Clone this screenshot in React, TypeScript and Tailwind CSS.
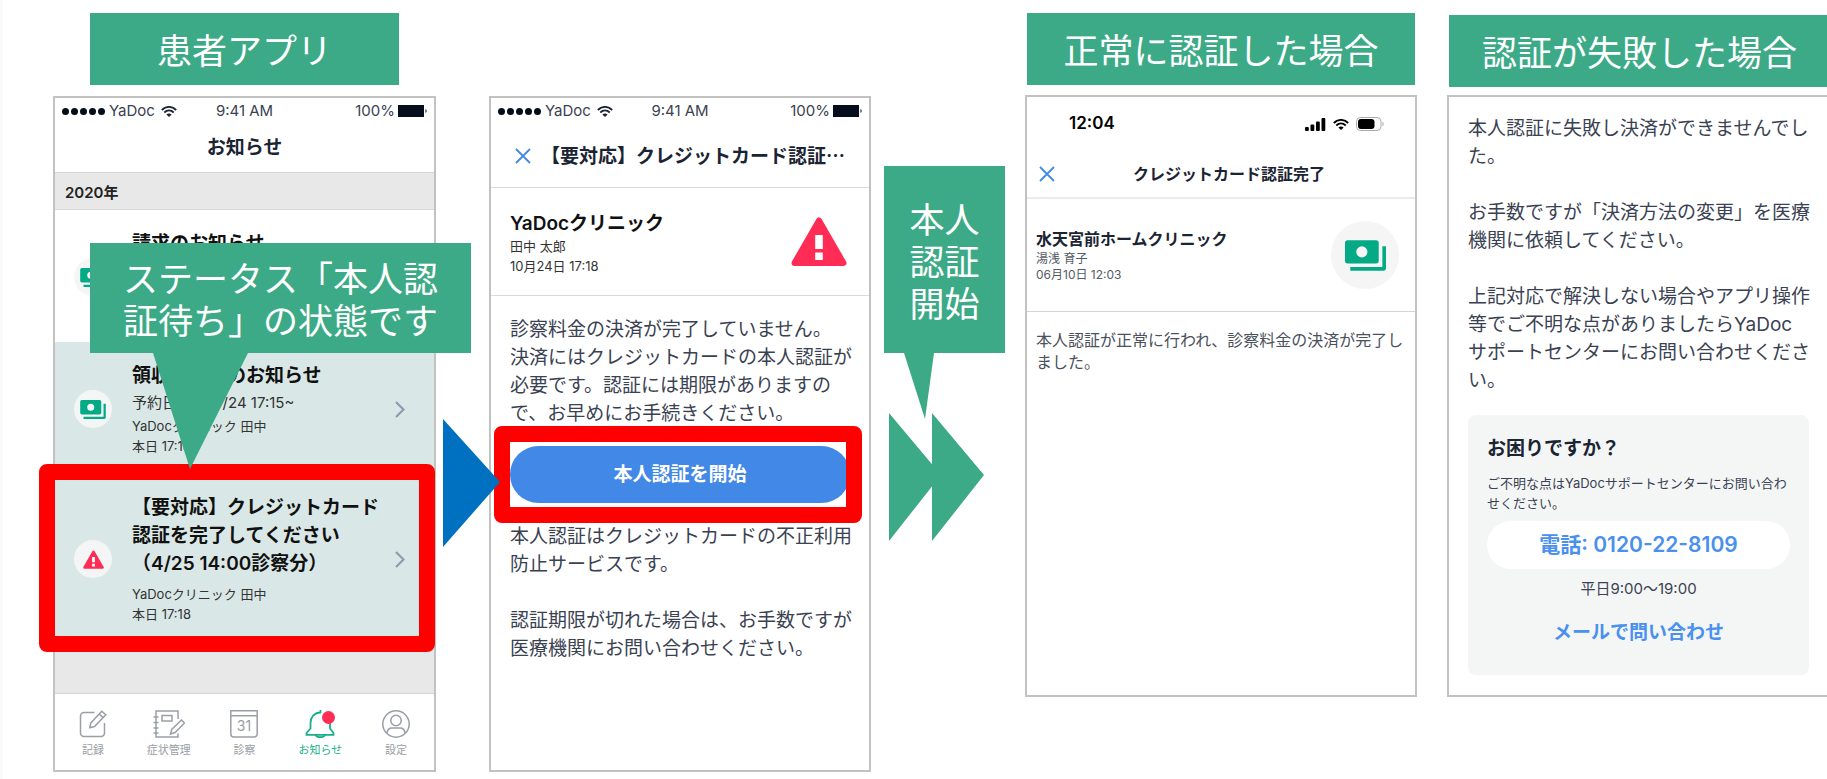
import type { ReactNode } from "react";
import clsx from "clsx";

const JP = "font-['Inter','Noto_Sans_CJK_JP',sans-serif]";
const GREEN = "bg-[#3caa86]";

const TABS = [
  { label: "記録", icon: <RecordIcon /> },
  { label: "症状管理", icon: <NotebookIcon /> },
  { label: "診察", icon: <CalendarIcon /> },
  { label: "お知らせ", icon: <BellIcon />, active: true },
  { label: "設定", icon: <UserIcon /> },
];

function RecordIcon() {
  return (
    <svg viewBox="0 0 28 28" className="size-7" fill="none" stroke="currentColor" strokeWidth="1.5">
      <path d="M15.5 2.5H5A3.5 3.5 0 0 0 1.5 6v17A3.5 3.5 0 0 0 5 26.5h17a3.5 3.5 0 0 0 3.5-3.5V13" />
      <path d="M22.8 1.2l4 3.6-11.3 11.7-4.7 1.3 1-4.9zM20.3 4l3.8 3.6" />
    </svg>
  );
}

function NotebookIcon() {
  return (
    <svg viewBox="0 0 32 28" className="h-7 w-8" fill="none" stroke="currentColor" strokeWidth="1.5">
      <path d="M25 9V1H3v26h22v-3.5" />
      <path d="M.5 7h5M.5 12.5h5M.5 18h5M.5 23h5" />
      <path d="M9 5.5h10v5.5H9z" />
      <path d="M28.5 10l3 3-9.5 9.5-4.5 1.5 1.2-4.5z" />
    </svg>
  );
}

function CalendarIcon() {
  return (
    <svg viewBox="0 0 28 28" className="size-7" fill="none" stroke="currentColor" strokeWidth="1.5">
      <path d="M.8.8h26.4V24a3 3 0 0 1-3 3H3.8a3 3 0 0 1-3-3zM.8 5.8h26.4" />
      <text x="14" y="21" textAnchor="middle" fontSize="14" fill="currentColor" stroke="none">
        31
      </text>
    </svg>
  );
}

function BellIcon() {
  return (
    <svg viewBox="0 0 30 28" className="h-7 w-[30px]" fill="none" stroke="currentColor" strokeWidth="1.8">
      <path d="M16 2.5C9 2.5 5.5 7.5 5.5 13v5.5L1.5 23v1.8h27V23L25 18.5V13M15.5 0v3" />
      <path d="M10.5 25c1 3 8.5 3 9.5 0" />
      <circle cx="23.5" cy="7.5" r="6.5" fill="#ff2d55" stroke="none" />
    </svg>
  );
}

function UserIcon() {
  return (
    <svg viewBox="0 0 30 28" className="h-7 w-[30px]" fill="none" stroke="currentColor" strokeWidth="1.5">
      <circle cx="15" cy="14" r="13.2" />
      <circle cx="15" cy="10.5" r="5.2" />
      <path d="M6 23.3c.3-3.6 1.5-5.3 5-5.3h8c3.5 0 4.7 1.700 5 5.3" />
    </svg>
  );
}

function CashIcon({ className }: { className: string }) {
  return (
    <svg viewBox="0 0 62 46" className={className} fill="#04aa85">
      <path
        fillRule="evenodd"
        d="M4 0h43a4 4 0 0 1 4 4v27a4 4 0 0 1-4 4H4a4 4 0 0 1-4-4V4a4 4 0 0 1 4-4zm21.5 9a8.5 8.5 0 1 0 0 17 8.5 8.5 0 0 0 0-17z"
      />
      <path d="M56.5 9H62v33a4 4 0 0 1-4 4H8v-5.5h48.5z" />
    </svg>
  );
}

function WarningIcon({ className }: { className: string }) {
  return (
    <svg viewBox="0 0 56 49" className={className}>
      <path d="M28 3.5 52.5 46h-49z" fill="#ff2d55" stroke="#ff2d55" strokeWidth="6" strokeLinejoin="round" />
      <path d="M24.2 18h7.6v14h-7.6zM24.2 35.5h7.6V43h-7.6z" fill="#fff" />
    </svg>
  );
}

function WifiIcon({ className }: { className: string }) {
  return (
    <svg viewBox="0 0 16 11" className={className} fill="none" stroke="currentColor" strokeWidth="1.8">
      <path d="M.8 4C5-.2 11-.2 15.2 4M3.300 6.5c2.8-2.7 6.6-2.7 9.4 0" />
      <path d="M8 11 5.4 8.5c1.5-1.4 3.7-1.4 5.2 0z" fill="currentColor" stroke="none" />
    </svg>
  );
}

function CloseButton() {
  return (
    <button type="button" aria-label="閉じる" className="shrink-0 text-[#4288e6]">
      <svg viewBox="0 0 16 16" className="size-4" fill="none" stroke="currentColor" strokeWidth="1.8">
        <path d="M1 1l14 14M15 1 1 15" />
      </svg>
    </button>
  );
}

function Chevron() {
  return (
    <svg viewBox="0 0 10 17" className="h-[17px] w-[10px] shrink-0" fill="none" stroke="#8e9bb0" strokeWidth="2.2">
      <path d="M1 1l7.5 7.5L1 16" />
    </svg>
  );
}

function StatusBar() {
  return (
    <div className="grid h-[26px] grid-cols-[1fr_auto_1fr] items-center px-[7px] text-[15px] text-[#3a4250]">
      <div className="flex items-center gap-1">
        <div className="flex gap-[2px]">
          {[0, 1, 2, 3, 4].map((i) => (
            <span key={i} className="size-[7px] rounded-full bg-[#030d1c]" />
          ))}
        </div>
        <span>YaDoc</span>
        <WifiIcon className="ml-[2px] h-[11px] w-4 text-[#1b2433]" />
      </div>
      <span>9:41 AM</span>
      <div className="flex items-center justify-end gap-[3px]">
        <span>100%</span>
        <svg viewBox="0 0 29 12" className="h-3 w-[29px]" fill="#030d1c">
          <path d="M0 0h26v12H0zM27.5 4c1.500.5 1.500 3.500 0 4z" />
        </svg>
      </div>
    </div>
  );
}

function Banner({ children, className }: { children: ReactNode; className?: string }) {
  return (
    <h2 className={clsx("flex h-[72px] items-center justify-center whitespace-nowrap text-[35px] text-white", GREEN, className)}>
      {children}
    </h2>
  );
}

function Phone({ children, className }: { children: ReactNode; className?: string }) {
  return (
    <section className={clsx("relative flex flex-col border-2 border-[#c2c2c2] bg-white", JP, className)}>
      {children}
    </section>
  );
}

function NoticeRow({
  icon,
  title,
  sub,
  meta,
  unread,
  children,
}: {
  icon: ReactNode;
  title: string;
  sub?: string;
  meta: string;
  unread?: boolean;
  children?: ReactNode;
}) {
  return (
    <li className={clsx("relative", unread ? "bg-[#d9e8e6]" : "bg-white")}>
      <a href="#" className="flex items-center pt-5 pr-[29px] pb-[18px] pl-[19px]">
        <span className="flex size-[38px] shrink-0 items-center justify-center rounded-full bg-[#f4f6f6]">{icon}</span>
        <span className="ml-5 flex-1 whitespace-pre">
          <span className="block text-[19px] leading-7 font-semibold text-[#111]">{title}</span>
          {sub && <span className="block text-[15px] leading-[26px] text-[#333]">{sub}</span>}
          <span className={clsx("block text-[13px] leading-5 text-[#333]", !sub && "mt-[6px]")}>{meta}</span>
        </span>
        <Chevron />
      </a>
      {children}
    </li>
  );
}

function NoticeList() {
  return (
    <Phone className="mt-[11px]">
      <StatusBar />
      <h3 className="flex h-[49px] items-center justify-center border-b border-[#d4d4d4] text-[19px] font-semibold text-[#1b2433]">
        お知らせ
      </h3>
      <div className="flex h-[37px] items-center border-b border-[#d8d8d8] bg-[#e8e8e8] px-[10px] pt-1 text-[15px] font-semibold text-[#222]">
        2020年
      </div>
      <ul className="bg-[#e8e8e8] pb-[51px]">
        <NoticeRow
          icon={<CashIcon className="h-[19px] w-[26px]" />}
          title="請求のお知らせ"
          sub="予約日時：10/24 17:15~"
          meta={"YaDocクリニック 田中\n本日 17:18"}
        />
        <NoticeRow
          unread
          icon={<CashIcon className="h-[19px] w-[26px]" />}
          title="領収書発行のお知らせ"
          sub="予約日時：10/24 17:15~"
          meta={"YaDocクリニック 田中\n本日 17:18"}
        />
        <NoticeRow
          unread
          icon={<WarningIcon className="h-[19px] w-[21px]" />}
          title={"【要対応】クレジットカード\n認証を完了してください\n（4/25 14:00診察分）"}
          meta={"YaDocクリニック 田中\n本日 17:18"}
        >
          <div className="pointer-events-none absolute -inset-y-[10px] -right-px -left-4 rounded-lg border-16 border-[#ff0000]" />
        </NoticeRow>
      </ul>
      <nav className="grid h-[77px] grid-cols-5 border-t border-[#d4d4d4] bg-white pt-4">
        {TABS.map((t) => (
          <a
            key={t.label}
            href="#"
            className={clsx("flex flex-col items-center gap-1 text-[11px] leading-4", t.active ? "text-[#18b08a]" : "text-[#9a9ea6]")}
          >
            {t.icon}
            {t.label}
          </a>
        ))}
      </nav>

      <div className={clsx("absolute top-[145px] left-[35px] z-10 w-[381px] py-[13px] pl-[33px] text-[35px] leading-[42px] whitespace-pre text-white font-['Noto_Sans_CJK_JP',sans-serif]", GREEN)}>
        {"ステータス「本人認\n証待ち」の状態です"}
        <svg viewBox="0 0 95 116" className="absolute top-full left-[63px] h-[116px] w-[95px]" fill="#3caa86">
          <path d="M0 0h95L37 116z" />
        </svg>
      </div>
    </Phone>
  );
}

function AuthRequest() {
  return (
    <Phone className="mt-[83px] flex-1">
      <StatusBar />
      <div className="flex h-16 items-center border-b border-[#d8dadc] pl-6 whitespace-nowrap">
        <CloseButton />
        <h3 className="ml-[10px] font-['Noto_Sans_CJK_JP',sans-serif] text-[19px] font-semibold text-[#1b2433]">
          【要対応】クレジットカード認証…
        </h3>
      </div>
      <div className="flex h-[108px] items-center justify-between border-b border-[#d8dadc] pr-[22px] pl-[19px]">
        <div className="text-[13px] leading-5 text-[#333]">
          <h4 className="pt-1 text-[19px] leading-6 font-semibold text-[#111]">YaDocクリニック</h4>
          <p>田中 太郎</p>
          <p>10月24日 17:18</p>
        </div>
        <WarningIcon className="h-[49px] w-14" />
      </div>
      <div className="px-[19px] pt-5 text-[19px] leading-7 whitespace-pre text-[#3a4252]">
        <p>{"診察料金の決済が完了していません。\n決済にはクレジットカードの本人認証が\n必要です。認証には期限がありますの\nで、お早めにお手続きください。"}</p>
        <div className="relative mt-[18px] mb-5">
          <button type="button" className="block h-[57px] w-full rounded-full bg-[#4288e6] text-center font-semibold text-white">
            本人認証を開始
          </button>
          <div className="pointer-events-none absolute -inset-y-5 -right-3 -left-4 rounded-lg border-16 border-[#ff0000]" />
        </div>
        <p>{"本人認証はクレジットカードの不正利用\n防止サービスです。\n\n認証期限が切れた場合は、お手数ですが\n医療機関にお問い合わせください。"}</p>
      </div>
    </Phone>
  );
}

function AuthDone() {
  return (
    <Phone className="mt-[10px] min-h-[602px]">
      <div className="flex h-[54px] items-center justify-between pr-[31px] pl-[42px] text-black">
        <span className="text-[17px] font-semibold">12:04</span>
        <div className="flex items-center gap-[7px]">
          <svg viewBox="0 0 21 13" className="h-[13px] w-[21px]" fill="currentColor">
            <rect x="0" y="9" width="3.8" height="4" rx="1" />
            <rect x="5.5" y="6.5" width="3.8" height="6.5" rx="1" />
            <rect x="11" y="3.5" width="3.8" height="9.5" rx="1" />
            <rect x="16.5" y="0" width="3.8" height="13" rx="1" />
          </svg>
          <WifiIcon className="h-[11px] w-4" />
          <svg viewBox="0 0 28 14" className="h-[14px] w-7">
            <rect x=".5" y=".5" width="24.5" height="13" rx="4" fill="none" stroke="#aaa" />
            <rect x="2" y="2" width="16.5" height="10" rx="3" />
            <path d="M26.5 4.5c1.5.8 1.5 4.2 0 5z" fill="#aaa" />
          </svg>
        </div>
      </div>
      <div className="flex h-12 items-center border-b-2 border-[#ebebeb] px-3">
        <CloseButton />
        <h3 className="flex-1 text-center text-[16px] font-semibold text-[#1b2433]">クレジットカード認証完了</h3>
      </div>
      <div className="flex h-[113px] items-center justify-between border-b border-[#d4d4d4] pr-4 pl-[9px]">
        <div className="text-[12px] leading-4 text-[#555b66]">
          <h4 className="text-[16px] leading-6 font-semibold text-[#1b2433]">水天宮前ホームクリニック</h4>
          <p>湯浅 育子</p>
          <p>06月10日 12:03</p>
        </div>
        <span className="flex size-[68px] items-center justify-center rounded-full bg-[#f5f5f5]">
          <CashIcon className="h-[31px] w-[41px]" />
        </span>
      </div>
      <p className="px-[9px] pt-[17px] text-[16px] leading-[22px] whitespace-pre text-[#4a505c]">
        {"本人認証が正常に行われ、診察料金の決済が完了し\nました。"}
      </p>
    </Phone>
  );
}

function AuthFailed() {
  return (
    <Phone className="mt-2 px-[19px] pt-[18px] pb-5">
      <p className="text-[19px] leading-7 whitespace-pre text-[#3a4252]">
        {"本人認証に失敗し決済ができませんでし\nた。\n\nお手数ですが「決済方法の変更」を医療\n機関に依頼してください。\n\n上記対応で解決しない場合やアプリ操作\n等でご不明な点がありましたらYaDoc\nサポートセンターにお問い合わせくださ\nい。"}
      </p>
      <div className="mt-5 flex flex-col rounded-lg bg-[#f4f6f6] px-[19px] pt-5 pb-7 text-[#3a4252]">
        <h4 className="text-[19px] leading-7 font-semibold text-[#1b2433]">お困りですか？</h4>
        <p className="mt-[10px] text-[13px] leading-5 whitespace-pre">
          {"ご不明な点はYaDocサポートセンターにお問い合わ\nせください。"}
        </p>
        <a
          href="tel:0120-22-8109"
          className="mt-2 flex h-12 items-center justify-center rounded-full bg-white text-[21px] font-semibold text-[#4a90ee]"
        >
          電話: 0120-22-8109
        </a>
        <p className="mt-[10px] text-center text-[15px] leading-5">平日9:00〜19:00</p>
        <a href="#" className="mt-5 self-center text-[19px] leading-7 font-semibold text-[#4a90ee]">
          メールで問い合わせ
        </a>
      </div>
    </Phone>
  );
}

export default function App() {
  return (
    <main
      lang="ja"
      className="overflow-hidden border-l-3 border-[#f9fafc] bg-white pb-[7px] font-['Noto_Sans_CJK_JP',sans-serif] [text-spacing-trim:space-all]"
    >
      <div className="-mr-[3px] grid grid-cols-[383fr_53fr_382fr_154fr_392fr_30fr_383fr] pt-[13px] pl-[50px]">
        <div className="relative z-10 flex min-w-0 flex-col">
          <Banner className="mx-[37px]">患者アプリ</Banner>
          <NoticeList />
        </div>

        <div className="z-20 min-w-0 pt-[406px] pl-[7px]">
          <svg viewBox="0 0 57 128" className="h-32 w-[57px] max-w-none" fill="#0070c0">
            <path d="M0 0l57 63L0 128z" />
          </svg>
        </div>

        <div className="flex min-w-0 flex-col">
          <AuthRequest />
        </div>

        <div className="min-w-0 pt-[153px] pl-[13px]">
          <div className={clsx("relative flex h-[187px] w-[121px] items-center justify-center text-[35px] leading-[42px] whitespace-pre text-white", GREEN)}>
            {"本人\n認証\n開始"}
            <svg viewBox="0 0 30 66" className="absolute top-full left-5 h-[66px] w-[30px]" fill="#3caa86">
              <path d="M0 0h30l-9 66z" />
            </svg>
          </div>
          <svg viewBox="0 0 95 128" className="mt-[60px] ml-[5px] h-32 w-[95px]" fill="#3caa86">
            <path d="M0 0l52 62L0 128zM43 0l52 62-52 66z" />
          </svg>
        </div>

        <div className="flex min-w-0 flex-col">
          <Banner className="mx-[2px]">正常に認証した場合</Banner>
          <AuthDone />
        </div>

        <div className="col-start-7 flex min-w-0 flex-col self-start pt-[2px]">
          <Banner className="ml-[2px]">認証が失敗した場合</Banner>
          <AuthFailed />
        </div>
      </div>
    </main>
  );
}
